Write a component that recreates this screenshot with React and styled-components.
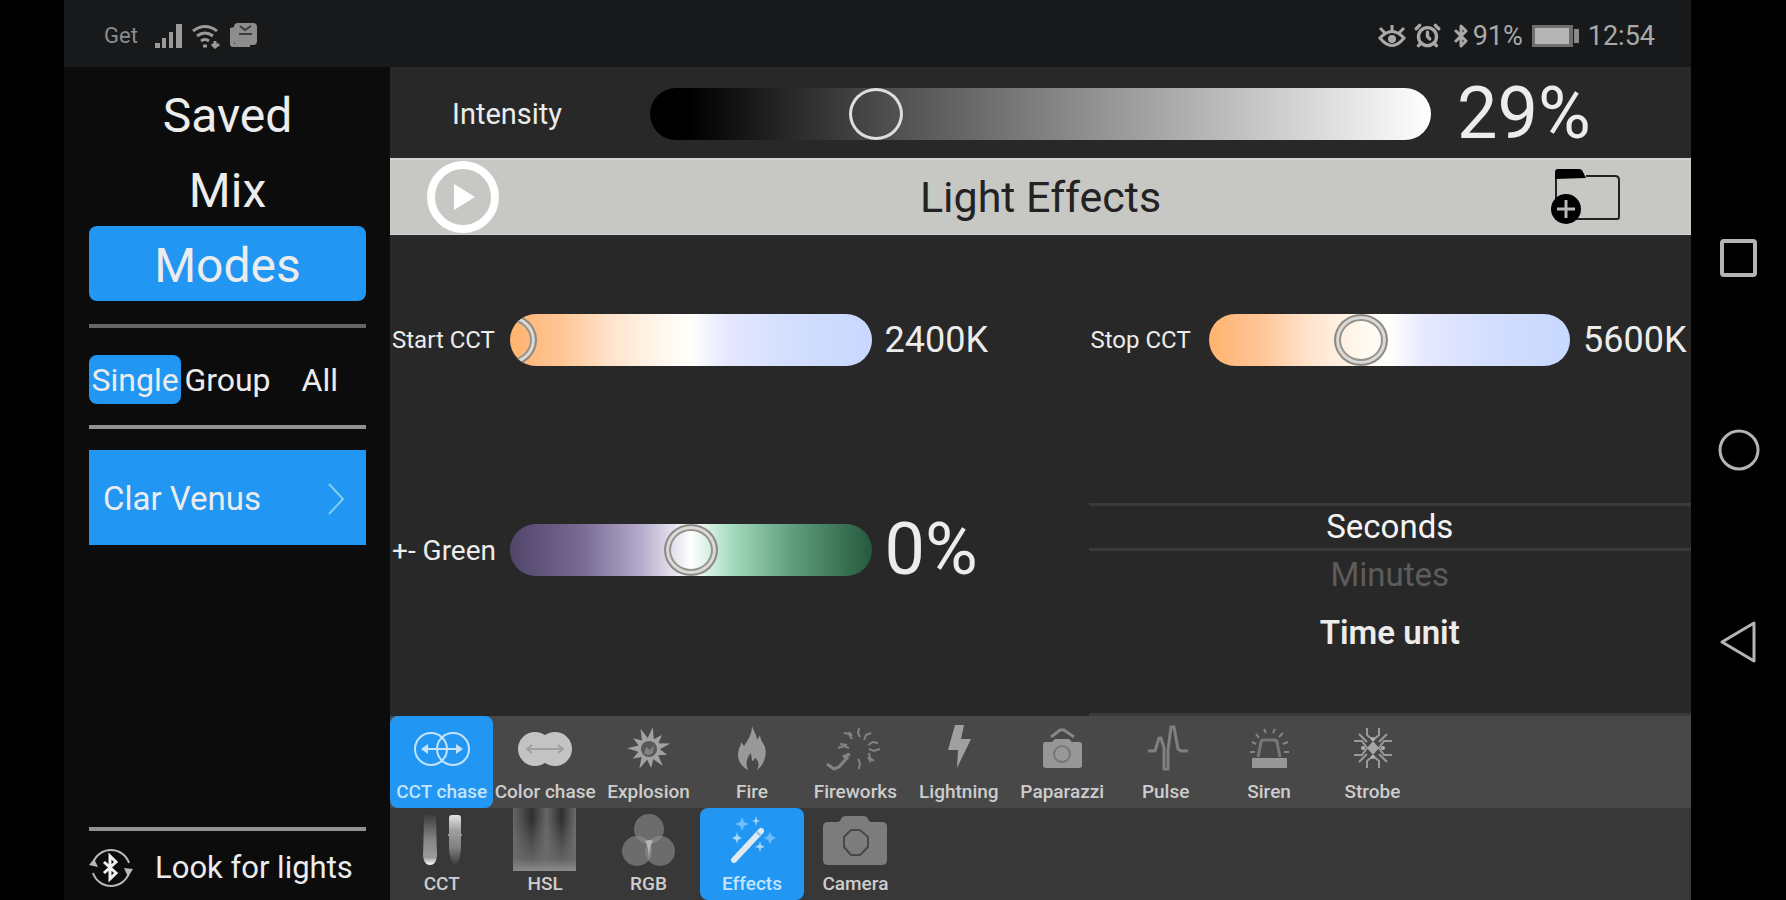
import React, { useState } from "react";
import styled, { createGlobalStyle, css } from "styled-components";
import { AlarmClock, Bluetooth } from "lucide-react";

const GlobalStyle = createGlobalStyle`
  * {
    box-sizing: border-box;
  }
  body {
    margin: 0;
    background: #000;
    font-family: Roboto, "Liberation Sans", sans-serif;
  }
  button {
    margin: 0;
    padding: 0;
    border: 0;
    background: none;
    color: inherit;
    font: inherit;
    cursor: pointer;
  }
  svg {
    display: block;
    flex: none;
  }
`;

const Screen = styled.div`
  display: flex;
  min-height: 100vh;
  padding-left: 64px;
  background: #000;
  color: #ececec;
`;
const Phone = styled.div`
  flex: 1;
  min-width: 0;
  display: flex;
  flex-direction: column;
`;
const Body = styled.div`
  flex: 1;
  display: flex;
`;

/* status bar */
const StatusBar = styled.header`
  display: flex;
  align-items: center;
  justify-content: space-between;
  height: 67px;
  padding: 4px 36px 0 40px;
  background: #18191b;
  color: #a9a9a9;
  font-size: 27px;
`;
const StatusGroup = styled.div`
  display: flex;
  align-items: center;
  gap: 8px;
`;
const Carrier = styled.span`
  margin-right: 8px;
  font-size: 22px;
  color: #8c8c8c;
`;
const BatteryLevel = styled.span`
  display: flex;
  align-items: center;
`;

/* sidebar */
const Sidebar = styled.aside`
  display: flex;
  flex-direction: column;
  width: 326px;
  padding: 9px 24px 0 25px;
  background: #0c0c0c;
`;
const ModeButton = styled.button`
  height: 75px;
  padding-top: 4px;
  border-radius: 8px;
  font-size: 48px;
  line-height: 71px;
  background: ${(props) => (props.$active ? "#2196f3" : "transparent")};
`;
const Divider = styled.hr`
  width: 100%;
  height: 4px;
  margin: ${(props) => props.$margin};
  border: 0;
  background: ${(props) => (props.$dim ? "#666" : "#929292")};
`;
const Segments = styled.div`
  display: grid;
  grid-template-columns: repeat(3, 1fr);
`;
const Segment = styled.button`
  height: 49px;
  border-radius: 8px;
  font-size: 32px;
  line-height: 48px;
  background: ${(props) => (props.$active ? "#2196f3" : "transparent")};
`;
const Device = styled.button`
  display: flex;
  align-items: center;
  justify-content: space-between;
  height: 95px;
  padding: 2px 21px 0 14px;
  background: #2196f3;
  font-size: 33px;
`;
const Search = styled.button`
  display: flex;
  align-items: center;
  gap: 22px;
  height: 69px;
  padding-top: 4px;
  font-size: 31px;
  white-space: nowrap;
`;

/* main panel */
const Main = styled.main`
  flex: 1;
  min-width: 0;
  display: flex;
  flex-direction: column;
  background: #282828;
`;
const IntensityRow = styled.section`
  display: grid;
  grid-template-columns: 198px 1fr 208px;
  column-gap: 26px;
  align-items: center;
  height: 91px;
  padding: 2px 26px 0 36px;
`;
const IntensityLabel = styled.label`
  padding-left: 26px;
  font-size: 29px;
`;
const BigValue = styled.output`
  font-size: 72px;
  line-height: 72px;
`;
const TitleBar = styled.section`
  display: grid;
  grid-template-columns: 1fr auto 1fr;
  align-items: center;
  height: 77px;
  padding: 0 70px 0 36px;
  background: #c7c7c4;
  border-top: 2px solid #d4d4d2;
  border-bottom: 1px solid #d4d4d2;
`;
const TitleAction = styled.button`
  justify-self: ${(props) => props.$side};
`;
const Title = styled.h1`
  margin: 0;
  padding-left: 34px;
  color: #222;
  font-size: 43px;
  font-weight: 400;
`;
const Params = styled.section`
  flex: 1;
  display: grid;
  grid-template-columns: 1fr 1fr;
  grid-template-rows: 210px 1fr;
  column-gap: 96px;
`;
const Param = styled.div`
  display: grid;
  grid-template-columns: 107px 1fr 108px;
  column-gap: 13px;
  align-items: center;
  height: 210px;
  white-space: nowrap;
`;
const ParamLabel = styled.label`
  padding-left: 2px;
  font-size: ${(props) => (props.$large ? "28px" : "24px")};
`;
const ParamValue = styled.output`
  font-size: ${(props) => (props.$large ? "72px" : "36px")};
  line-height: 72px;
`;

/* slider: the input is wider than the track by half a thumb on each side */
const Track = styled.div`
  height: 52px;
  overflow: hidden;
  border-radius: 26px;
  background: ${(props) => props.$fill};
`;
const thumb = css`
  width: 54px;
  height: 52px;
  border-radius: 50%;
  background: transparent;
  border: ${(props) => (props.$plain ? "3px solid #dedede" : "2px solid #8c8a86")};
  box-shadow: ${(props) =>
    props.$plain ? "none" : "inset 0 0 0 3px #dcdad6, inset 0 0 0 5px #96948f"};
`;
const Range = styled.input`
  display: block;
  appearance: none;
  width: calc(100% + 54px);
  height: 52px;
  margin: 0 -27px;
  background: transparent;
  cursor: pointer;
  &::-webkit-slider-thumb {
    appearance: none;
    ${thumb}
  }
  &::-moz-range-thumb {
    box-sizing: border-box;
    ${thumb}
  }
`;

/* time unit picker */
const Picker = styled.div`
  display: flex;
  flex-direction: column;
  align-items: stretch;
  padding-top: 58px;
  border-bottom: 3px solid #3a3a3a;
  text-align: center;
`;
const UnitOption = styled.button`
  height: 48px;
  font-size: 33px;
  line-height: 42px;
  color: ${(props) => (props.$active ? "#f4f4f4" : "#5c5c5c")};
  border-top: 3px solid ${(props) => (props.$active ? "#3a3a3a" : "transparent")};
  border-bottom: 3px solid ${(props) => (props.$active ? "#3a3a3a" : "transparent")};
`;
const PickerTitle = styled.h2`
  margin: 12px 0 0;
  font-size: 33px;
  font-weight: 600;
  line-height: 44px;
`;

/* bottom tabs */
const TabBar = styled.nav`
  display: flex;
  height: 92px;
  background: ${(props) => props.$bg};
`;
const Tab = styled.button`
  flex: 0 0 7.95%;
  display: flex;
  flex-direction: column;
  align-items: center;
  border-radius: 8px;
  background: ${(props) => (props.$active ? "#2196f3" : "transparent")};
  color: ${(props) => (props.$active ? "#c4e4fd" : "#969696")};
`;
const TabLabel = styled.span`
  color: ${(props) => (props.$active ? "#c4e4fd" : "#cdcdcd")};
  font-size: 19px;
  font-weight: 500;
  line-height: 26px;
  white-space: nowrap;
`;

/* system keys */
const SystemKeys = styled.nav`
  display: flex;
  flex-direction: column;
  align-items: center;
  justify-content: center;
  gap: 150px;
  width: 95px;
  color: #b4b4b4;
`;

const Icon = ({ children }) => (
  <svg width="64" height="63" viewBox="0 0 64 63" fill="none" aria-hidden="true">
    {children}
  </svg>
);

const burst = (count, inner, outer, cx, cy) =>
  Array.from({ length: count * 2 }, (_, i) => {
    const a = ((i + 0.6) / count) * Math.PI;
    const r = i % 2 ? inner : outer - (i % 4 ? 3 : 0);
    return `${cx + Math.sin(a) * r},${cy - Math.cos(a) * r}`;
  }).join(" ");

const CctChaseIcon = () => (
  <Icon>
    <g stroke="currentColor" strokeWidth="2">
      <circle cx="21" cy="33" r="16" />
      <circle cx="43" cy="33" r="16" />
      <path d="M14 33h36" />
    </g>
    <path d="M11 33l7-5v10zM53 33l-7-5v10z" fill="currentColor" />
  </Icon>
);
const ColorChaseIcon = () => (
  <Icon>
    <circle cx="22" cy="33" r="17" fill="#c3c3c3" />
    <circle cx="42" cy="33" r="17" fill="#c3c3c3" />
    <path d="M15 33h34M19 29l-5 4 5 4M45 29l5 4-5 4" stroke="#a0a0a0" strokeWidth="2" />
  </Icon>
);
const ExplosionIcon = () => (
  <Icon>
    <polygon points={burst(11, 11, 22, 32, 33)} fill="#a2a2a2" />
    <circle cx="32" cy="33" r="8" fill="#585858" />
    <path d="M27 38l2-7 4 3 4-5-1 8-4 2z" fill="#828282" />
  </Icon>
);
const FireIcon = () => (
  <Icon>
    <path
      d="M32 10c2 6 5 9 5 14l3-5c0 5 3 7 5 12 2 7 0 17-8 23 3-6 1-10-2-12-1 2-2 3-3 3 0-3-1-5-1-8-4 4-6 10-3 17-6-3-10-9-10-15s3-9 3-13l3 4c4-6 8-12 8-20z"
      fill="#999"
    />
  </Icon>
);
const FireworksIcon = () => (
  <Icon>
    <g stroke="#838383" strokeWidth="2">
      <path d="M36 12l-1 5 2 4M48 17l-5 2-2 5M55 27l-5-1-5 3M57 33l-6 2-5-2M51 45l-4-3-1-5M48 46l-3-5M36 53l1-6-2-4" />
      <path d="M21 17l5 1 3 5M15 32l6-2 5 2M17 28l7 1M26 16l3 4" />
    </g>
    <path d="M4 48l7 5 5-2 8-9-4-2M20 41l7-3" stroke="#838383" strokeWidth="3" />
  </Icon>
);
const LightningIcon = () => (
  <Icon>
    <path d="M28 9h9l-3 14h10L30 52l1-18H21z" fill="#a0a0a0" />
  </Icon>
);
const PaparazziIcon = () => (
  <Icon>
    <path d="M21 21l9-7h4l10 7" stroke="#868686" strokeWidth="3" />
    <path d="M15 26h7l3-3h14l3 3h7q3 0 3 3v20q0 3-3 3H16q-3 0-3-3V29q0-3 2-3z" fill="#979797" />
    <circle cx="32" cy="38" r="8" stroke="#767676" strokeWidth="2" />
  </Icon>
);
const PulseIcon = () => (
  <Icon>
    <path
      d="M14 35h7l4-13h2l3 10v21h4V34l3-23h3l4 22 3 2h7"
      stroke="#808080"
      strokeWidth="3"
      strokeLinejoin="round"
    />
  </Icon>
);
const SirenIcon = () => (
  <Icon>
    <rect x="15" y="42" width="35" height="10" rx="1" fill="#979797" />
    <path d="M21 41l3-15q0-2 3-2h10q3 0 3 2l3 15" stroke="#777" strokeWidth="3" />
    <path
      d="M27 13l2 4M38 13l-2 4M19 18l3 4M46 17l-4 4M15 26l4 2M51 26l-5 2M13 36h5M52 36h-5"
      stroke="#858585"
      strokeWidth="2"
    />
  </Icon>
);
const StrobeIcon = () => (
  <Icon>
    <g stroke="#9a9a9a" strokeWidth="2">
      <path d="M26 12v7l6 5 6-5v-7M26 52v-7l6-5 6 5v7" />
      <path d="M13 25h8l5 7-5 7h-8M51 25h-8l-5 7 5 7h8" />
      <path d="M18 18l8 8M46 18l-8 8M18 46l8-8M46 46l-8-8" strokeWidth="2" />
    </g>
    <path d="M32 25l6 7-6 7-6-7z" fill="#a4a4a4" />
    <g fill="#b0b0b0">
      <circle cx="32" cy="23" r="2" />
      <circle cx="32" cy="41" r="2" />
      <circle cx="22" cy="32" r="2" />
      <circle cx="42" cy="32" r="2" />
    </g>
  </Icon>
);
const CctIcon = () => (
  <Icon>
    <defs>
      <linearGradient id="cct-warm" x2="0" y2="1">
        <stop stopColor="#3e3e3e" />
        <stop offset="0.5" stopColor="#868686" />
        <stop offset="0.85" stopColor="#9a9a9a" />
        <stop offset="1" stopColor="#fff" />
      </linearGradient>
      <linearGradient id="cct-cool" x2="0" y2="1">
        <stop stopColor="#e6e6e6" />
        <stop offset="0.3" stopColor="#a0a0a0" />
        <stop offset="0.65" stopColor="#808080" />
        <stop offset="1" stopColor="#3c3c3c" />
      </linearGradient>
    </defs>
    <path d="M17 7h6q3 0 3 3l1 38q-1 9-7 9t-7-9l1-38q0-3 3-3z" fill="url(#cct-warm)" />
    <path d="M42 7h6q3 0 3 3v30q-1 15-6 17-5-2-6-17V10q0-3 3-3z" fill="url(#cct-cool)" />
    <path d="M38 27h14" stroke="#999" strokeWidth="2" />
  </Icon>
);
const HslIcon = () => (
  <Icon>
    <defs>
      <linearGradient id="hsl-hue">
        <stop stopColor="#666" />
        <stop offset="0.3" stopColor="#303030" />
        <stop offset="0.53" stopColor="#666" />
        <stop offset="0.77" stopColor="#303030" />
        <stop offset="1" stopColor="#6c6c6c" />
      </linearGradient>
      <linearGradient id="hsl-fade" x2="0" y2="1">
        <stop offset="0.2" stopColor="#777" stopOpacity="0" />
        <stop offset="0.8" stopColor="#6c6c6c" stopOpacity="0.8" />
        <stop offset="1" stopColor="#8c8c8c" />
      </linearGradient>
    </defs>
    <path d="M0 0h63v63H0z" fill="url(#hsl-hue)" />
    <path d="M0 0h63v63H0z" fill="url(#hsl-fade)" />
  </Icon>
);
const RgbIcon = () => (
  <Icon>
    <g fill="#8f8f8f" fillOpacity="0.6">
      <circle cx="32" cy="21" r="15" />
      <circle cx="20" cy="43" r="15" />
      <circle cx="43" cy="43" r="15" />
    </g>
    <path d="M28 33q4-2 8 0-3 3-4 18-1-15-4-18z" fill="#b4b4b4" />
  </Icon>
);
const WandIcon = () => (
  <Icon>
    <path d="M14 52l27-29" stroke="#e0e8f0" strokeWidth="6" strokeLinecap="round" />
    <path d="M37 24l4 4" stroke="#7fc2fa" strokeWidth="2" />
    <path
      d="M22 9l2 5 5 2-5 2-2 5-2-5-5-2 5-2zM50 24l2 4 4 2-4 2-2 4-2-4-4-2 4-2z"
      fill="#6fbcf8"
    />
    <path
      d="M36 8l1 4 3 1-3 1-1 4-1-4-3-1 3-1zM17 24l1 4 4 2-4 2-1 4-1-4-4-2 4-2zM40 33l1 4 4 2-4 1-1 4-1-4-4-1 4-2z"
      fill="#a8dafb"
    />
  </Icon>
);
const CameraIcon = () => (
  <Icon>
    <path
      d="M5 14h10q2 0 3-3 1-3 5-3h17q4 0 5 3 1 3 3 3h11q5 0 5 5v33q0 5-5 5H5q-5 0-5-5V19q0-5 5-5z"
      fill="#7c7c7c"
    />
    <path d="M28 22h9l8 7v10l-8 8h-9l-7-8V29z" stroke="#484848" strokeWidth="2" />
  </Icon>
);

const SignalIcon = () => (
  <svg width="30" height="26" viewBox="0 0 30 26" fill="#9a9a9a" aria-hidden="true">
    <path d="M1 20h5v5H1zM8 15h4v10H8zM15 9h4v16h-4zM22 1h6v24h-6z" />
  </svg>
);
const WifiIcon = () => (
  <svg width="28" height="26" viewBox="0 0 28 26" fill="none" stroke="#9a9a9a" strokeWidth="3" aria-hidden="true">
    <path d="M1 8q12-9 24 0M5 13q8-6 16 0M9 18q4-3 8 0" />
    <path d="M11 23h4M23 18v6M20 21l3 3 4-3" />
  </svg>
);
const GalleryIcon = () => (
  <svg width="30" height="27" viewBox="0 0 30 27" aria-hidden="true">
    <path d="M2 6v16q0 3 3 3h17v-3H6V5z" fill="#8d8d8d" />
    <rect x="6" y="1" width="23" height="22" rx="4" fill="#8d8d8d" />
    <path d="M12 4l5 4 6-4M11 12h13" fill="none" stroke="#3c3c3c" strokeWidth="2" />
  </svg>
);
const EyeIcon = () => (
  <svg width="28" height="26" viewBox="0 0 28 26" fill="none" stroke="currentColor" strokeWidth="3" aria-hidden="true">
    <path d="M2 15q12-13 24 0-12 15-24 0zM14 9V2M7 10L2 5M21 10l5-5" />
    <circle cx="14" cy="16" r="4" fill="currentColor" stroke="none" />
  </svg>
);
const BatteryIcon = () => (
  <svg width="49" height="24" viewBox="0 0 49 24" aria-hidden="true">
    <rect x="1" y="1" width="41" height="22" fill="#6f6f6f" />
    <rect x="4" y="4" width="34" height="16" fill="#b4b4b4" />
    <rect x="43" y="5" width="5" height="14" fill="#8a8a8a" />
  </svg>
);
const BluetoothSearchIcon = () => (
  <svg width="44" height="44" viewBox="0 0 44 44" fill="none" stroke="#b8b8b8" aria-hidden="true">
    <path d="M4 17A19 19 0 0 1 40 17M40 27A19 19 0 0 1 4 27" strokeWidth="2" />
    <path d="M0 19l5-6 4 8zM44 23l-5 8-4-9z" fill="#b8b8b8" strokeWidth="0" />
    <path d="M15 16l12 11-6 6V10l6 6-12 11" stroke="#f0f0f0" strokeWidth="3" />
  </svg>
);
const ChevronIcon = () => (
  <svg width="18" height="34" viewBox="0 0 18 34" fill="none" stroke="#7fd0e8" strokeWidth="2" aria-hidden="true">
    <path d="M2 2l14 15L2 32" />
  </svg>
);
const PlayIcon = () => (
  <svg width="74" height="74" viewBox="0 0 74 74" aria-hidden="true">
    <circle cx="37" cy="37" r="32" fill="none" stroke="#fff" strokeWidth="8" />
    <path d="M28 24l21 13-21 13z" fill="#fff" />
  </svg>
);
const FolderAddIcon = () => (
  <svg width="71" height="58" viewBox="0 0 71 58" aria-hidden="true">
    <path d="M6 5v46h61q2 0 2-2V12q0-4-4-4H36" fill="none" stroke="#222" strokeWidth="2" />
    <path d="M5 11V4q0-3 3-3h21q3 0 4 3l3 6z" fill="#000" />
    <circle cx="16" cy="41" r="15" fill="#000" />
    <path d="M16 32v18M7 41h18" stroke="#b8b8b4" strokeWidth="3" />
  </svg>
);

const MODES = ["Saved", "Mix", "Modes"];
const SEGMENTS = ["Single", "Group", "All"];
const UNITS = ["Seconds", "Minutes"];
const EFFECTS = [
  { name: "CCT chase", icon: CctChaseIcon },
  { name: "Color chase", icon: ColorChaseIcon },
  { name: "Explosion", icon: ExplosionIcon },
  { name: "Fire", icon: FireIcon },
  { name: "Fireworks", icon: FireworksIcon },
  { name: "Lightning", icon: LightningIcon },
  { name: "Paparazzi", icon: PaparazziIcon },
  { name: "Pulse", icon: PulseIcon },
  { name: "Siren", icon: SirenIcon },
  { name: "Strobe", icon: StrobeIcon },
];
const TOOLS = [
  { name: "CCT", icon: CctIcon },
  { name: "HSL", icon: HslIcon },
  { name: "RGB", icon: RgbIcon },
  { name: "Effects", icon: WandIcon },
  { name: "Camera", icon: CameraIcon },
];

const GREY = "linear-gradient(90deg, #000 0%, #000 5%, #4a4a4a 29%, #fff 100%)";
const CCT =
  "linear-gradient(90deg, #ffb36e 0%, #ffc596 14%, #ffe4cc 28%, #fff8ee 42%, #fffffc 50%, #e6e8ff 60%, #d2defe 78%, #c8d8ff 100%)";
const GREEN =
  "linear-gradient(90deg, #52456a 0%, #786b94 20%, #b4aacb 36%, #fff 50%, #a6dcc0 61%, #5f9d7d 78%, #25593d 100%)";

const Slider = ({ id, fill, plain, value, onChange, ...range }) => (
  <Track $fill={fill}>
    <Range
      id={id}
      type="range"
      $plain={plain}
      value={value}
      onChange={(e) => onChange(Number(e.target.value))}
      {...range}
    />
  </Track>
);

const Tabs = ({ items, active, onSelect, bg, label }) => (
  <TabBar $bg={bg} aria-label={label}>
    {items.map(({ name, icon: TabIcon }) => (
      <Tab key={name} $active={name === active} onClick={() => onSelect(name)}>
        <TabIcon />
        <TabLabel $active={name === active}>{name}</TabLabel>
      </Tab>
    ))}
  </TabBar>
);

const App = () => {
  const [mode, setMode] = useState("Modes");
  const [segment, setSegment] = useState("Single");
  const [intensity, setIntensity] = useState(29);
  const [startCct, setStartCct] = useState(2400);
  const [stopCct, setStopCct] = useState(5600);
  const [green, setGreen] = useState(0);
  const [unit, setUnit] = useState("Seconds");
  const [effect, setEffect] = useState("CCT chase");
  const [tool, setTool] = useState("Effects");

  return (
    <Screen>
      <GlobalStyle />
      <Phone>
        <StatusBar>
          <StatusGroup>
            <Carrier>Get</Carrier>
            <SignalIcon />
            <WifiIcon />
            <GalleryIcon />
          </StatusGroup>
          <StatusGroup>
            <EyeIcon />
            <AlarmClock size={27} strokeWidth={3} />
            <BatteryLevel>
              <Bluetooth size={24} strokeWidth={3} />
              91%
            </BatteryLevel>
            <BatteryIcon />
            <span>12:54</span>
          </StatusGroup>
        </StatusBar>

        <Body>
          <Sidebar>
            {MODES.map((name) => (
              <ModeButton key={name} $active={name === mode} onClick={() => setMode(name)}>
                {name}
              </ModeButton>
            ))}
            <Divider $dim $margin="23px 0 27px" />
            <Segments>
              {SEGMENTS.map((name) => (
                <Segment key={name} $active={name === segment} onClick={() => setSegment(name)}>
                  {name}
                </Segment>
              ))}
            </Segments>
            <Divider $margin="21px 0" />
            <Device>
              Clar Venus
              <ChevronIcon />
            </Device>
            <Divider $margin="auto 0 0" />
            <Search>
              <BluetoothSearchIcon />
              Look for lights
            </Search>
          </Sidebar>

          <Main>
            <IntensityRow>
              <IntensityLabel htmlFor="intensity">Intensity</IntensityLabel>
              <Slider
                id="intensity"
                fill={GREY}
                plain
                min={0}
                max={100}
                value={intensity}
                onChange={setIntensity}
              />
              <BigValue htmlFor="intensity">{intensity}%</BigValue>
            </IntensityRow>

            <TitleBar>
              <TitleAction $side="start" aria-label="Play">
                <PlayIcon />
              </TitleAction>
              <Title>Light Effects</Title>
              <TitleAction $side="end" aria-label="Save effect">
                <FolderAddIcon />
              </TitleAction>
            </TitleBar>

            <Params>
              <Param>
                <ParamLabel htmlFor="start-cct">Start CCT</ParamLabel>
                <Slider
                  id="start-cct"
                  fill={CCT}
                  min={2400}
                  max={10000}
                  step={100}
                  value={startCct}
                  onChange={setStartCct}
                />
                <ParamValue htmlFor="start-cct">{startCct}K</ParamValue>
              </Param>
              <Param>
                <ParamLabel htmlFor="stop-cct">Stop CCT</ParamLabel>
                <Slider
                  id="stop-cct"
                  fill={CCT}
                  min={2400}
                  max={10000}
                  step={100}
                  value={stopCct}
                  onChange={setStopCct}
                />
                <ParamValue htmlFor="stop-cct">{stopCct}K</ParamValue>
              </Param>
              <Param>
                <ParamLabel $large htmlFor="green">
                  +- Green
                </ParamLabel>
                <Slider
                  id="green"
                  fill={GREEN}
                  min={-100}
                  max={100}
                  value={green}
                  onChange={setGreen}
                />
                <ParamValue $large htmlFor="green">
                  {green}%
                </ParamValue>
              </Param>
              <Picker>
                {UNITS.map((name) => (
                  <UnitOption key={name} $active={name === unit} onClick={() => setUnit(name)}>
                    {name}
                  </UnitOption>
                ))}
                <PickerTitle>Time unit</PickerTitle>
              </Picker>
            </Params>

            <Tabs items={EFFECTS} active={effect} onSelect={setEffect} bg="#484848" label="Effects" />
            <Tabs items={TOOLS} active={tool} onSelect={setTool} bg="#383838" label="Modes" />
          </Main>
        </Body>
      </Phone>

      <SystemKeys aria-label="System">
        <button aria-label="Recent apps">
          <svg width="42" height="42" viewBox="0 0 42 42" fill="none" stroke="currentColor" strokeWidth="4">
            <rect x="4" y="4" width="33" height="34" rx="2" />
          </svg>
        </button>
        <button aria-label="Home">
          <svg width="42" height="42" viewBox="0 0 42 42" fill="none" stroke="currentColor" strokeWidth="3">
            <circle cx="21" cy="21" r="19" />
          </svg>
        </button>
        <button aria-label="Back">
          <svg width="42" height="42" viewBox="0 0 42 42" fill="none" stroke="currentColor" strokeWidth="3" strokeLinejoin="round">
            <path d="M36 2v38L4 21z" />
          </svg>
        </button>
      </SystemKeys>
    </Screen>
  );
};

export default App;
